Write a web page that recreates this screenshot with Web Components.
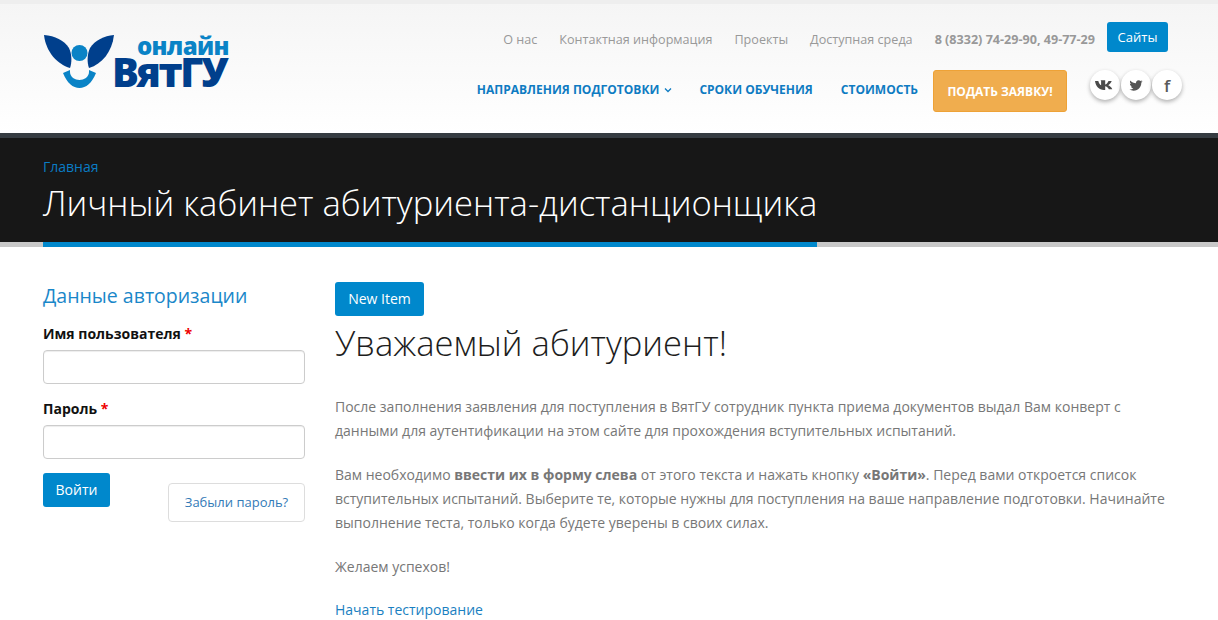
<!DOCTYPE html>
<html lang="ru"><head><meta charset="utf-8"><title>ВятГУ</title>
<style>
html,body{margin:0;padding:0;background:#fff;overflow:hidden;height:620px}
body{font-family:"Open Sans",sans-serif;font-size:14px;color:#777}
</style></head><body>
<site-header></site-header>
<page-title crumb="Главная" heading="Личный кабинет абитуриента-дистанционщика"></page-title>
<page-main>
  <login-form slot="side"></login-form>
  <article-body slot="main"></article-body>
</page-main>
<script>
function def(name, html, init){
  customElements.define(name, class extends HTMLElement{
    constructor(){super();this.attachShadow({mode:'open'}).innerHTML=html;}
    connectedCallback(){ if(init) init(this); }
  });
}
def('site-logo',`<style>
:host{display:block;width:190px;height:56px;position:relative}
svg{position:absolute;left:0;top:0}
.a,.b{position:absolute;font-family:"Open Sans",sans-serif;font-weight:800;line-height:1;white-space:nowrap}
.a{left:94px;top:-1px;font-size:24px;color:#0a83c6;letter-spacing:-.7px}
.b{left:69px;top:17px;font-size:40px;color:#003f8c;letter-spacing:-2.400px}
</style>
<svg width="72" height="56" viewBox="0 0 72 56">
<path d="M1 0C12 1 21 5 26 13C29 19 29 28 27 33C14 29 3 17 1 0Z" fill="#003f8c"/>
<path d="M71 0C61 1 52 5 47 13C44 19 44 28 46 33C59 29 69 17 71 0Z" fill="#003f8c"/>
<circle cx="36.500" cy="18" r="8" fill="#0a83c6"/>
<path d="M27 35V37C27 42 32 45 36.500 45C41 45 46 42 46 37V35L53 38C49 48 43 53 36.500 53C30 53 24 48 20 38Z" fill="#0a83c6"/>
</svg>
<span class="a">онлайн</span><span class="b">ВятГУ</span>`);

def('social-btn',`<style>
:host{display:flex;width:30px;height:30px;border-radius:50%;background:#fff;box-shadow:0 2px 4px rgba(0,0,0,.3);align-items:center;justify-content:center;color:#5a5a5a;font:600 17px "Open Sans",sans-serif}
</style><slot></slot>`);

def('site-header',`<style>
:host{display:block;height:129px;border-top:4px solid #eee;background:linear-gradient(#f5f5f5,#fff);box-sizing:content-box;position:relative}
.wrap{display:flex;justify-content:space-between;padding:31px 36px 0 43px;height:98px}
.right{display:flex;flex-direction:column;align-items:flex-end}
.top{display:flex;align-items:center;height:30px;margin-top:-13px;margin-right:14px;font-size:12.600px;color:#999}
.top span{margin:4px 0 0 22px}
.top b{margin:4px 0 0 22px;font-weight:700;color:#999;font-size:12.580px}
.sites{margin-left:12px;background:#0088cc;color:#fff;border-radius:3px;height:30px;width:61px;display:flex;align-items:center;justify-content:center;font-size:13px}
.nav{display:flex;align-items:flex-start;margin-top:18px}
.nav a{color:#0e7bc2;font-weight:700;font-size:12px;line-height:15px;margin-top:12px;text-transform:uppercase;white-space:nowrap;display:flex;align-items:center}
.nav a+a{margin-left:28px}
.nav a.s{margin-left:27px}
.nav a svg{margin-left:5px}
.cta{margin-left:15px;width:134px;height:42px;background:#f0ad4e;border:1px solid #eea236;border-radius:3px;box-sizing:border-box;color:#fff;font-weight:700;font-size:12px;display:flex;align-items:center;justify-content:center;text-transform:uppercase}
.soc{display:flex;margin-left:23px;gap:1px}
svg{display:block}
</style>
<div class="wrap">
<site-logo></site-logo>
<div class="right">
<div class="top"><span>О нас</span><span>Контактная информация</span><span>Проекты</span><span>Доступная среда</span><b>8 (8332) 74-29-90, 49-77-29</b><div class="sites">Сайты</div></div>
<div class="nav">
<a>Направления подготовки<svg width="8" height="6" viewBox="0 0 8 6"><path d="M1 1.500L4 4.500L7 1.500" fill="none" stroke="#0e7bc2" stroke-width="1.300"/></svg></a>
<a class="s">Сроки обучения</a><a>Стоимость</a>
<div class="cta">Подать заявку!</div>
<div class="soc">
<social-btn><svg width="20" height="10" viewBox="0 0 20 12" preserveAspectRatio="none"><path d="M0 1.200h3.300c.5 2.500 1.700 4.600 2.800 5V1.200c0-.6-.4-.9-.9-1h5v5.300c1 0 2.600-2.100 3.300-4.300h3.200c-.5 2.300-2.300 4.100-3.500 5.100 1.400.8 3.300 2.400 4.100 4.700h-3.500c-.7-1.900-2.300-3.300-3.600-3.500V11.900H9C4 11.900 .8 8 0 1.200Z" fill="#4a4a4a"/></svg></social-btn>
<social-btn><svg width="14" height="11" viewBox="0 0 18 15"><path d="M18 1.800c-.7.300-1.400.5-2.100.6.800-.5 1.300-1.200 1.600-2-.7.400-1.500.7-2.300.9A3.700 3.700 0 0 0 9 4.600C6 4.500 3.300 3 1.300.7c-1 1.700-.5 3.800 1.100 4.900-.6 0-1.200-.2-1.700-.5 0 1.800 1.300 3.300 3 3.700-.5.100-1.100.2-1.700.1.500 1.500 1.900 2.500 3.500 2.600A7.500 7.500 0 0 1 0 13c1.700 1 3.600 1.600 5.700 1.600 6.900 0 10.700-5.700 10.500-10.900.7-.5 1.300-1.200 1.800-1.900Z" fill="#555"/></svg></social-btn>
<social-btn>f</social-btn>
</div>
</div>
</div>
</div>`);

def('page-title',`<style>
:host{display:block;background:#171717;border-top:5px solid #363c42;height:104px;position:relative;padding:0 43px;box-sizing:content-box}
.c{display:block;color:#0a7cc4;font-size:14px;line-height:19px;padding-top:19px}
h1{margin:4px 0 0;font-weight:300;font-size:34.600px;line-height:45px;color:#fff;white-space:nowrap}
.bar{position:absolute;left:0;right:0;top:104px;height:5px;background:#c8c8c8}
.bar i{display:block;margin-left:43px;width:774px;height:5px;background:#0088cc}
</style><span class="c"></span><h1></h1><div class="bar"><i></i></div>`, el=>{
  el.shadowRoot.querySelector('.c').textContent=el.getAttribute('crumb');
  el.shadowRoot.querySelector('h1').textContent=el.getAttribute('heading');
});

def('page-main',`<style>
:host{display:flex;padding:40px 43px 0;margin-top:5px;gap:30px;align-items:flex-start}
.s{width:262px;flex:none}.m{flex:1;min-width:0}
</style><div class="s"><slot name="side"></slot></div><div class="m"><slot name="main"></slot></div>`);

def('login-form',`<style>
:host{display:block}
h3{margin:-5px 0 0;font-weight:400;font-size:19.500px;line-height:28px;color:#1a87c9}
label{display:block;font-weight:700;font-size:14px;line-height:20px;color:#111}
label i{color:#e00;font-style:normal}
.l1{margin-top:14px}.l2{margin-top:15px}
input{display:block;box-sizing:border-box;width:262px;height:34px;margin-top:6px;border:1px solid #ccc;border-radius:4px;background:#fff;padding:0;box-shadow:inset 0 1px 1px rgba(0,0,0,.075)}
.row{display:flex;justify-content:space-between;margin-top:14px;align-items:flex-start}
.btn{width:67px;height:34px;box-sizing:border-box;padding-bottom:2px;background:#0088cc;color:#fff;border-radius:3px;display:flex;align-items:center;justify-content:center;font-size:14px}
.f{margin-top:10px;width:137px;height:39px;box-sizing:border-box;padding-bottom:2px;border:1px solid #ddd;border-radius:4px;color:#337ab7;font-size:13px;display:flex;align-items:center;justify-content:center;background:#fff}
</style>
<h3>Данные авторизации</h3>
<label class="l1">Имя пользователя <i>*</i></label><input type="text" aria-label="Имя пользователя">
<label class="l2">Пароль <i>*</i></label><input type="password" aria-label="Пароль">
<div class="row"><div class="btn">Войти</div><div class="f">Забыли пароль?</div></div>`);

def('article-body',`<style>
:host{display:block;font-size:14px;line-height:24px;color:#777}
.btn{display:flex;width:89px;height:34px;background:#0088cc;color:#fff;border-radius:3px;align-items:center;justify-content:center;font-size:14px;margin-top:-5px}
h2{margin:6px 0 0;font-weight:300;font-size:34.600px;line-height:42px;color:#1d1d1d}
p{margin:0 0 20px}
p.first{margin-top:31px}
b{font-weight:700;color:#777}
a{color:#1a7fc1}
</style>
<div class="btn">New Item</div>
<h2>Уважаемый абитуриент!</h2>
<p class="first">После заполнения заявления для поступления в ВятГУ сотрудник пункта приема документов выдал Вам конверт с<br>данными для аутентификации на этом сайте для прохождения вступительных испытаний.</p>
<p>Вам необходимо <b>ввести их в форму слева</b> от этого текста и нажать кнопку <b>«Войти»</b>. Перед вами откроется список<br>вступительных испытаний. Выберите те, которые нужны для поступления на ваше направление подготовки. Начинайте<br>выполнение теста, только когда будете уверены в своих силах.</p>
<p style="margin-bottom:19px">Желаем успехов!</p>
<p><a>Начать тестирование</a></p>`);
</script>
</body></html>
